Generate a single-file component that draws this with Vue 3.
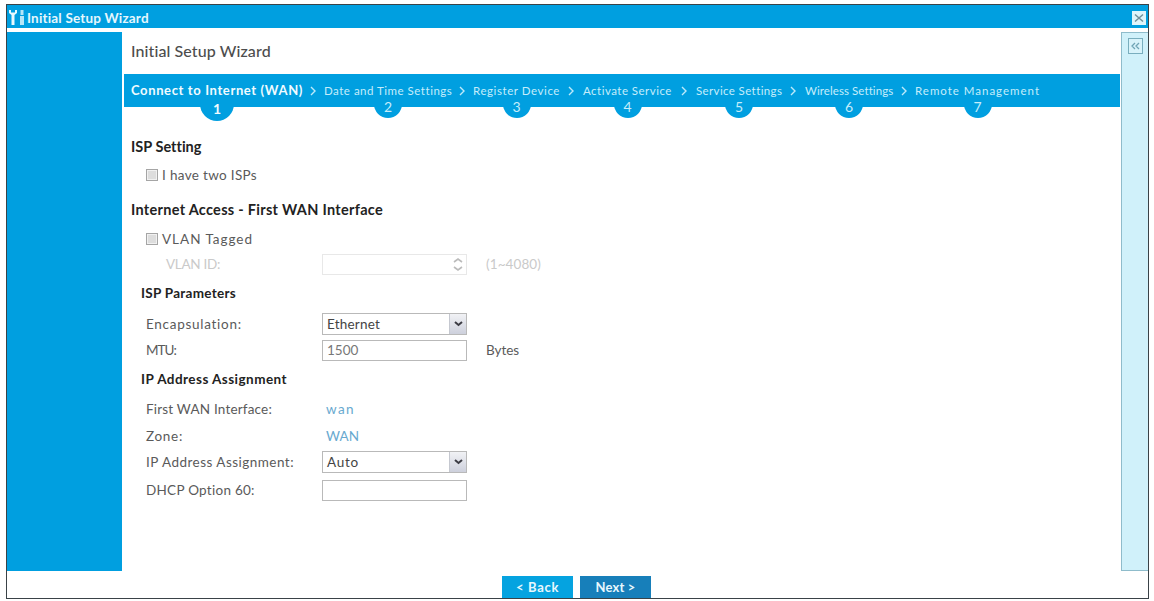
<script setup>
import { ref } from 'vue';

const twoIsps = ref(false);
const vlanTagged = ref(false);
const vlanId = ref('');
const mtu = ref('1500');
const dhcpOption = ref('');
const current = ref(1);

const steps = [
  { id: 1, title: 'Connect to Internet (WAN)', width: 172, gap: 21 },
  { id: 2, title: 'Date and Time Settings', width: 128, gap: 21 },
  { id: 3, title: 'Register Device', width: 87, gap: 23 },
  { id: 4, title: 'Activate Service', width: 89, gap: 24 },
  { id: 5, title: 'Service Settings', width: 86, gap: 23 },
  { id: 6, title: 'Wireless Settings', width: 88, gap: 22 },
  { id: 7, title: 'Remote Management', width: 125, gap: 0 },
];

// Tracks the letters out so that the text fills the given width
const vFit = {
  mounted(el, { value }) {
    const natural = el.getBoundingClientRect().width;
    const count = el.textContent.trim().length;
    el.style.letterSpacing = `${(value - natural) / count}px`;
  },
};
</script>

<template>
  <div class="page">
    <div class="window">
      <header class="titlebar">
        <svg class="tools" width="16" height="16" viewBox="0 0 16 16">
          <path d="M0 0v3l2.5 2v10h3V5L8 3V0H6v2.5H2V0z" fill="#e9f9fe" />
          <path d="M11.5 0h3v5h-3zM11 6h4v9h-4z" fill="#b5e6f8" />
        </svg>
        <span v-fit="122" class="text">Initial Setup Wizard</span>
        <button class="close">
          <svg width="14" height="14" viewBox="0 0 14 14">
            <path d="M3 3.5l8 7M11 3.5l-8 7" stroke="#71909b" stroke-width="1.5" />
          </svg>
        </button>
      </header>

      <div class="body">
        <aside class="sidebar"></aside>

        <main class="main">
          <h1><span v-fit="140" class="text">Initial Setup Wizard</span></h1>

          <nav class="steps">
            <template v-for="step in steps" :key="step.id">
              <div
                class="step"
                :class="{ active: step.id === current }"
                :style="{ width: step.width + 'px' }"
              >
                <span class="number">{{ step.id }}</span>
                <span v-fit="step.width" class="text">{{ step.title }}</span>
              </div>
              <span v-if="step.gap" class="arrow" :style="{ width: step.gap + 'px' }">
                <svg width="7" height="10" viewBox="0 0 7 10">
                  <path d="M1 1l4 4-4 4" fill="none" stroke="#bdeafa" stroke-width="1.4" />
                </svg>
              </span>
            </template>
          </nav>

          <form class="form" @submit.prevent>
            <h2><span v-fit="70" class="text">ISP Setting</span></h2>
            <label class="check">
              <input v-model="twoIsps" type="checkbox" />
              <span v-fit="95" class="text">I have two ISPs</span>
            </label>

            <h2 class="tall"><span v-fit="252" class="text">Internet Access - First WAN Interface</span></h2>
            <label class="check short">
              <input v-model="vlanTagged" type="checkbox" />
              <span v-fit="91" class="text">VLAN Tagged</span>
            </label>
            <div class="row disabled">
              <span class="label"><span v-fit="54" class="text">VLAN ID:</span></span>
              <div class="field">
                <input v-model="vlanId" type="text" disabled />
                <svg class="spinner" width="16" height="19" viewBox="0 0 16 19">
                  <path d="M4 7l4-3 4 3M4 12l4 3 4-3" fill="none" stroke="#bbb" stroke-width="1.6" />
                </svg>
              </div>
              <span v-fit="55" class="text">(1~4080)</span>
            </div>

            <h3><span v-fit="95" class="text">ISP Parameters</span></h3>
            <div class="row encapsulation">
              <span class="label"><span v-fit="96" class="text">Encapsulation:</span></span>
              <div class="field select">
                <span v-fit="53" class="text value">Ethernet</span>
                <span class="trigger">
                  <svg width="9" height="6" viewBox="0 0 9 6">
                    <path d="M1 1l3.5 3L8 1" fill="none" stroke="#3c3c44" stroke-width="2" />
                  </svg>
                </span>
              </div>
            </div>
            <div class="row mtu">
              <span class="label"><span v-fit="30" class="text">MTU:</span></span>
              <div class="field"><input v-model="mtu" type="text" /></div>
              <span v-fit="33" class="text">Bytes</span>
            </div>

            <h3 class="tall"><span v-fit="146" class="text">IP Address Assignment</span></h3>
            <div class="row interface">
              <span class="label"><span v-fit="126" class="text">First WAN Interface:</span></span>
              <span v-fit="29" class="text link">wan</span>
            </div>
            <div class="row zone">
              <span class="label"><span v-fit="37" class="text">Zone:</span></span>
              <span v-fit="33" class="text link">WAN</span>
            </div>
            <div class="row assignment">
              <span class="label"><span v-fit="148" class="text">IP Address Assignment:</span></span>
              <div class="field select">
                <span v-fit="32" class="text value">Auto</span>
                <span class="trigger">
                  <svg width="9" height="6" viewBox="0 0 9 6">
                    <path d="M1 1l3.5 3L8 1" fill="none" stroke="#3c3c44" stroke-width="2" />
                  </svg>
                </span>
              </div>
            </div>
            <div class="row dhcp">
              <span class="label"><span v-fit="109" class="text">DHCP Option 60:</span></span>
              <div class="field"><input v-model="dhcpOption" type="text" /></div>
            </div>
          </form>
        </main>

        <aside class="panel">
          <button class="collapse">
            <svg width="9" height="8" viewBox="0 0 9 8">
              <path d="M4 1L1 4l3 3M8 1L5 4l3 3" fill="none" stroke="#6fa4b5" stroke-width="1.3" />
            </svg>
          </button>
        </aside>
      </div>

      <footer class="footer">
        <button class="btn"><span v-fit="43" class="text">&lt; Back</span></button>
        <button class="btn next"><span v-fit="40" class="text">Next &gt;</span></button>
      </footer>
    </div>
  </div>
</template>

<style>
body {
  margin: 0;
  background: #fff;
}
</style>

<style scoped>
* {
  box-sizing: border-box;
}

.page {
  height: 601px;
  padding: 4px 5px 2px 6px;
  font: 13.5px Lato, 'Century Gothic', sans-serif;
  color: #5a5a5a;
}

.window {
  display: flex;
  flex-direction: column;
  height: 595px;
  border: 1px solid #3a4247;
  background: #fff;
}

.text {
  display: inline-block;
  white-space: nowrap;
}

button {
  border: 0;
  padding: 0;
  font: inherit;
}

.titlebar {
  display: flex;
  align-items: center;
  height: 23px;
  padding: 3px 2px 0 2px;
  background: #009fe0;
  color: #e5f7fd;
  font-weight: 700;
}

.tools {
  margin-right: 2px;
}

.close {
  display: flex;
  width: 14px;
  height: 14px;
  margin-left: auto;
  background: #e0f5fb;
}

.body {
  display: flex;
  height: 539px;
  margin-top: 4px;
}

.sidebar {
  width: 115px;
  background: #009fe0;
}

.main {
  flex: 1;
  padding-left: 2px;
}

h1,
h2,
h3 {
  display: flex;
  align-items: center;
  margin: 0;
}

h1 {
  height: 42px;
  padding: 0 0 5px 7px;
  color: #4d4d4d;
  font-size: 16px;
  font-weight: 500;
}

.steps {
  display: flex;
  height: 33px;
  margin-right: 1px;
  padding-left: 7px;
  background: #009fe0;
  color: #c5edfb;
  font-size: 11.5px;
}

.step {
  position: relative;
  flex: none;
  height: 33px;
  line-height: 34px;
}

.step.active {
  color: #f0fbff;
  font-size: 13px;
  font-weight: 700;
  line-height: 32px;
}

.step .text {
  position: relative;
}

/* round tab that hangs below the bar */
.number {
  position: absolute;
  top: 16px;
  left: 50%;
  width: 28px;
  height: 28px;
  margin-left: -14px;
  border-radius: 50%;
  background: #009fe0;
  font-size: 14px;
  line-height: 34px;
  text-align: center;
}

.active .number {
  top: 13px;
  width: 34px;
  height: 34px;
  margin-left: -17px;
  line-height: 44px;
}

.arrow {
  display: flex;
  flex: none;
  align-items: center;
  justify-content: center;
}

.form {
  padding-top: 25px;
}

h2 {
  height: 28px;
  padding-left: 7px;
  color: #222;
  font-size: 14.5px;
  font-weight: 700;
}

h2.tall {
  height: 38px;
}

h3 {
  height: 28px;
  padding-left: 17px;
  color: #222;
  font-size: 13.5px;
  font-weight: 700;
}

h3.tall {
  height: 32px;
}

.check {
  display: flex;
  align-items: center;
  height: 30px;
  padding-left: 22px;
}

.check.short {
  height: 21px;
}

.check input {
  appearance: none;
  width: 12px;
  height: 12px;
  margin: 0 4px 0 0;
  border: 1px solid #a5a5a5;
  background: #ddd;
  box-shadow: inset 0 0 0 1px #f1f1f1;
}

.row {
  display: flex;
  align-items: center;
  height: 26px;
  padding-left: 22px;
}

.row.disabled {
  height: 30px;
  color: #cacaca;
}

.disabled .label {
  padding-left: 20px;
}

.row.encapsulation {
  height: 25px;
  margin: 4px 0 1px;
}

.row.interface {
  height: 28px;
}

.row.dhcp {
  height: 28px;
  margin-top: 1px;
}

.label {
  flex: none;
  width: 176px;
}

.field {
  display: flex;
  flex: none;
  width: 145px;
  height: 21px;
  margin-right: 19px;
  border: 1px solid #b9b9b9;
  background: #fff;
}

.field input {
  flex: 1;
  min-width: 0;
  padding: 0 4px;
  border: 0;
  outline: 0;
  background: none;
  color: #777;
  font: inherit;
}

.disabled .field {
  border-color: #e8e8e8;
}

.spinner {
  flex: none;
}

.select {
  height: 22px;
  align-items: center;
  color: #444;
}

.value {
  margin-left: 4px;
}

.trigger {
  display: flex;
  align-items: center;
  justify-content: center;
  width: 17px;
  height: 20px;
  margin-left: auto;
  border-left: 1px solid #c5c8d0;
  background: linear-gradient(#f1f2f5, #cdd0dc);
}

.link {
  margin-left: 4px;
  color: #68a9cf;
}

.panel {
  display: flex;
  justify-content: center;
  width: 27px;
  padding-top: 5px;
  border: 1px solid #8fbccb;
  border-right: 0;
  background: #d0f1fa;
}

.collapse {
  display: flex;
  align-items: center;
  justify-content: center;
  width: 15px;
  height: 16px;
  border: 1px solid #79aebe;
  background: #d8f3fa;
}

.footer {
  display: flex;
  gap: 7px;
  padding: 5px 0 0 495px;
}

.btn {
  width: 71px;
  height: 22px;
  background: #05a3e0;
  color: #e8f8fe;
  font-size: 13px;
  font-weight: 700;
}

.btn.next {
  background: #177fba;
}
</style>
